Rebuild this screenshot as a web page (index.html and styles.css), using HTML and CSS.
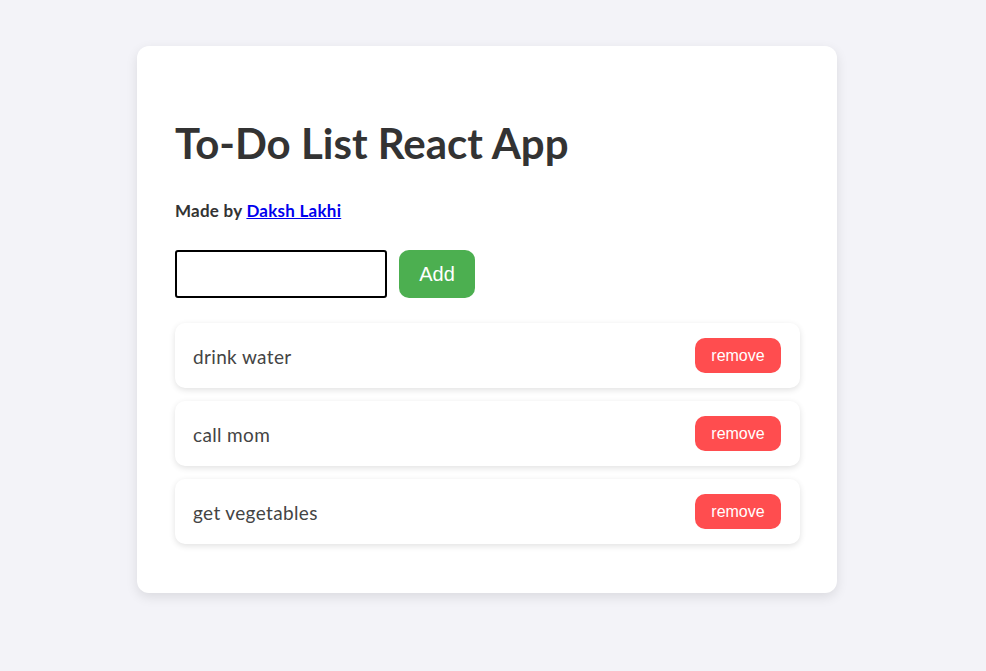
FILE: index.html
```html
<!DOCTYPE html>
<html lang="en">
<head>
<meta charset="utf-8">
<title>To-Do List React App</title>
<link rel="stylesheet" href="styles.css">
</head>
<body>
<div class="app">
  <h1 class="title">To-Do List React App</h1>
  <p class="credit">Made by <a href="#" class="credit-link">Daksh Lakhi</a></p>
  <div class="add-row">
    <input class="task-input" type="text">
    <button class="add-btn">Add</button>
  </div>
  <ul class="todo-list">
    <li class="todo-item"><span class="todo-text">drink water</span><button class="remove-btn">remove</button></li>
    <li class="todo-item"><span class="todo-text">call mom</span><button class="remove-btn">remove</button></li>
    <li class="todo-item"><span class="todo-text">get vegetables</span><button class="remove-btn">remove</button></li>
  </ul>
</div>
</body>
</html>
```
FILE: styles.css
```css
html, body {
  margin: 0;
  padding: 0;
}
body {
  background: #f3f3f8;
  font-family: Lato, "Open Sans", sans-serif;
  color: #333;
  padding-top: 46px;
  min-height: 671px;
  box-sizing: border-box;
}
.app {
  width: 700px;
  box-sizing: border-box;
  margin: 0 0 0 137px;
  background: #fff;
  border-radius: 12px;
  box-shadow: 0 4px 12px rgba(0, 0, 0, 0.1);
  padding: 70px 37px 49px 38px;
}
.title {
  margin: 0;
  font-size: 42px;
  line-height: 54px;
  font-weight: 700;
  color: #333;
}
.credit {
  margin: 30px 0 0;
  font-size: 17px;
  font-weight: 700;
  line-height: 22px;
  letter-spacing: 0.25px;
  color: #333;
}
.credit-link {
  color: #0000ee;
}
.add-row {
  display: flex;
  gap: 12px;
  margin-top: 28px;
}
.task-input {
  width: 212px;
  height: 48px;
  box-sizing: border-box;
  border: 2px solid #000;
  border-radius: 3px;
  margin: 0;
}
.add-btn {
  width: 76px;
  height: 48px;
  border: none;
  border-radius: 10px;
  background: #4caf50;
  color: #fff;
  font-family: "Liberation Sans", Arial, sans-serif;
  font-size: 20px;
  margin: 0;
}
.todo-list {
  list-style: none;
  margin: 25px 0 0;
  padding: 0;
  display: flex;
  flex-direction: column;
  gap: 13px;
}
.todo-item {
  height: 65px;
  box-sizing: border-box;
  display: flex;
  align-items: center;
  justify-content: space-between;
  padding: 0 19px 0 18px;
  background: #fff;
  border-radius: 10px;
  box-shadow: 0 2px 6px rgba(0, 0, 0, 0.12);
}
.todo-text {
  font-size: 19px;
  letter-spacing: 0.35px;
  color: #444;
  padding-top: 2px;
}
.remove-btn {
  width: 86px;
  height: 35px;
  border: none;
  border-radius: 10px;
  background: #ff4d4f;
  color: #fff;
  font-family: "Liberation Sans", Arial, sans-serif;
  font-size: 16px;
  margin: 0;
}
```
